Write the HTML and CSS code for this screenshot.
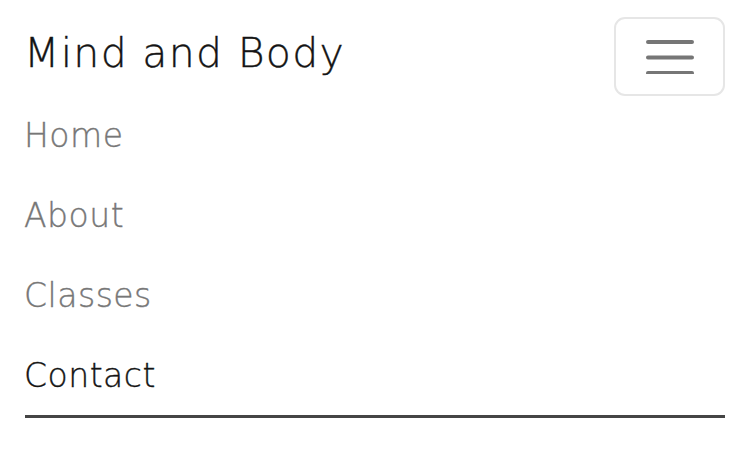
FILE: index.html
```
<!DOCTYPE html>
<html lang="en">
<head>
<meta charset="utf-8">
<title>Mind and Body</title>
<link rel="stylesheet" href="styles.css">
</head>
<body>
<nav class="navbar">
  <div class="navbar-top">
    <a class="brand" href="#">Mind and Body</a>
    <button class="toggler" type="button" aria-label="Toggle navigation">
      <svg width="50" height="36" viewBox="0 0 50 36" aria-hidden="true">
        <path d="M3 4H47M3 19.5H47M3 35H47" stroke="#767676" stroke-width="4" stroke-linecap="round" fill="none"/>
      </svg>
    </button>
  </div>
  <ul class="nav-list">
    <li><a class="nav-link" href="#">Home</a></li>
    <li><a class="nav-link" href="#">About</a></li>
    <li><a class="nav-link" href="#">Classes</a></li>
    <li><a class="nav-link active" href="#">Contact</a></li>
  </ul>
</nav>
</body>
</html>
```
FILE: styles.css
```
* { box-sizing: border-box; }
html, body { margin: 0; padding: 0; background: #fff; }
body { font-family: "DejaVu Sans", "Lato", sans-serif; }
.navbar { padding: 17px 25px 0 24px; }
.navbar-top {
  display: flex;
  justify-content: space-between;
  align-items: center;
  height: 78px;
}
.brand {
  font-size: 41px;
  font-weight: 200;
  letter-spacing: 1.3px;
  color: #141414;
  -webkit-text-stroke: 0.35px #141414;
  text-decoration: none;
  line-height: 1;
  margin-top: -6px;
}
.toggler {
  width: 111px;
  height: 79px;
  border: 2px solid #e6e6e6;
  border-radius: 11px;
  background: #fff;
  display: flex;
  align-items: center;
  justify-content: center;
  padding: 0;
}
.nav-list {
  list-style: none;
  margin: 0 0 0 1px;
  padding: 0;
  border-bottom: 3px solid #454545;
}
.nav-list li {
  height: 80px;
  display: flex;
  align-items: center;
}
.nav-link {
  font-size: 33px;
  font-weight: 200;
  letter-spacing: 0.5px;
  color: #777;
  -webkit-text-stroke: 0.35px #777;
  text-decoration: none;
  line-height: 1;
  margin-left: -1px;
}
.nav-link.active { color: #141414; -webkit-text-stroke-color: #141414; }
```
